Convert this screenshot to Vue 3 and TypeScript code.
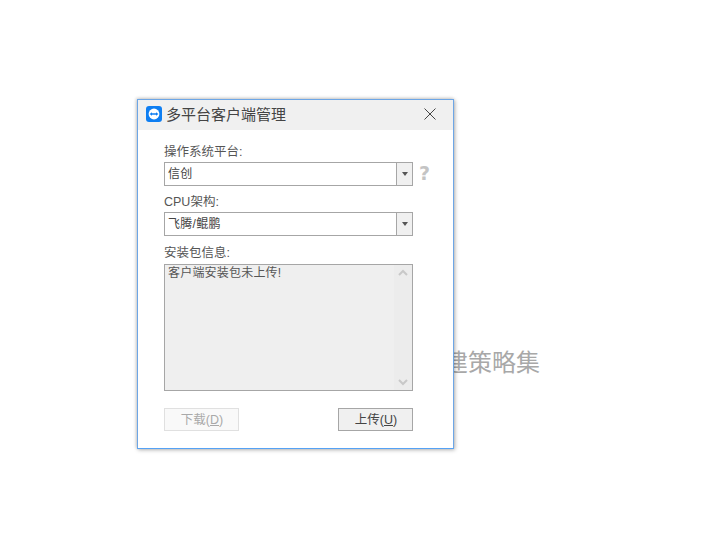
<script setup lang="ts">
const osValue = '信创'
const cpuValue = '飞腾/鲲鹏'
</script>

<template>
  <div class="page">
    <div class="bg-text">新建策略集</div>
    <section class="dialog">
      <header class="titlebar">
        <svg class="logo" width="16" height="16" viewBox="0 0 16 16">
          <rect width="16" height="16" rx="3" fill="#0e7ef2" />
          <circle cx="8" cy="8" r="5.4" fill="#fff" />
          <path d="M3.6 8 L6 6.3 V7.2 H10 V6.3 L12.4 8 L10 9.7 V8.8 H6 V9.7 Z" fill="#0e7ef2" />
        </svg>
        <span class="title">多平台客户端管理</span>
        <svg class="close" width="12" height="12" viewBox="0 0 12 12">
          <path d="M.5 .5 L11.5 11.5 M11.5 .5 L.5 11.5" stroke="#444" stroke-width="1" fill="none" />
        </svg>
      </header>
      <div class="body">
        <label class="label">操作系统平台:</label>
        <div class="select-row">
          <div class="select">
            <span class="value">{{ osValue }}</span>
            <span class="arrow"><i class="caret"></i></span>
          </div>
          <span class="help">?</span>
        </div>
        <label class="label second">CPU架构:</label>
        <div class="select">
          <span class="value">{{ cpuValue }}</span>
          <span class="arrow"><i class="caret"></i></span>
        </div>
        <label class="label third">安装包信息:</label>
        <div class="textarea">
          <div class="msg">客户端安装包未上传!</div>
          <div class="scrollbar">
            <svg width="10" height="7" viewBox="0 0 10 7"><path d="M1 6 L5 2 L9 6" stroke="#c8c8c8" stroke-width="2" fill="none" /></svg>
            <svg width="10" height="7" viewBox="0 0 10 7"><path d="M1 1 L5 5 L9 1" stroke="#c8c8c8" stroke-width="2" fill="none" /></svg>
          </div>
        </div>
        <div class="actions">
          <button class="btn disabled" type="button">下载(<u>D</u>)</button>
          <button class="btn" type="button">上传(<u>U</u>)</button>
        </div>
      </div>
    </section>
  </div>
</template>

<style>
html, body { margin: 0; background: #fff; }
</style>

<style scoped>
.page {
  position: relative;
  width: 702px;
  height: 555px;
  overflow: hidden;
  background: #fff;
  font-family: "Liberation Sans", "Noto Sans CJK SC", sans-serif;
}
.bg-text {
  position: absolute;
  left: 420px;
  top: 349px;
  font-size: 24px;
  line-height: 28px;
  color: #a8a8a8;
  white-space: nowrap;
}
.dialog {
  position: absolute;
  left: 137px;
  top: 99px;
  width: 317px;
  height: 350px;
  box-sizing: border-box;
  border: 1px solid #6da6e6;
  border-bottom-color: #55a2f5;
  background: #fff;
  box-shadow: 1px 1px 4px rgba(0, 0, 0, 0.3), -1px -1px 3px rgba(0, 0, 0, 0.15);
  display: flex;
  flex-direction: column;
}
.titlebar {
  height: 30px;
  flex: none;
  background: #f0f0f0;
  display: flex;
  align-items: center;
  padding: 0 17px 0 8px;
}
.logo { flex: none; margin-top: -2px; }
.title {
  margin-left: 4px;
  margin-top: -3px;
  font-size: 15px;
  color: #444;
  flex: 1;
}
.close { flex: none; margin-top: -2px; }
.body {
  flex: 1;
  padding: 13px 40px 0 26px;
  display: flex;
  flex-direction: column;
  align-items: flex-start;
}
.label {
  font-size: 12.5px;
  line-height: 18px;
  height: 18px;
  color: #555;
}
.second { margin-top: 7px; }
.third { margin-top: 8px; }
.select-row {
  position: relative;
  width: 249px;
}
.select {
  width: 249px;
  height: 24px;
  margin-top: 1px;
  box-sizing: border-box;
  border: 1px solid #a6a6a6;
  display: flex;
  background: #fff;
}
.value {
  flex: 1;
  font-size: 12px;
  line-height: 22px;
  padding-left: 3px;
  color: #444;
  letter-spacing: 0.3px;
}
.arrow {
  width: 15px;
  flex: none;
  background: #f0f0f0;
  border-left: 1px solid #a6a6a6;
  display: flex;
  align-items: center;
  justify-content: center;
}
.caret {
  width: 0;
  height: 0;
  border-left: 3.5px solid transparent;
  border-right: 3.5px solid transparent;
  border-top: 4px solid #555;
}
.help {
  position: absolute;
  left: 255px;
  top: 0;
  font-size: 19px;
  line-height: 24px;
  font-weight: 700;
  color: #c4c4c4;
  font-family: "DejaVu Sans", sans-serif;
}
.textarea {
  width: 249px;
  height: 127px;
  margin-top: 2px;
  box-sizing: border-box;
  border: 1px solid #a6a6a6;
  background: #efefef;
  display: flex;
}
.msg {
  flex: 1;
  font-size: 12px;
  line-height: 17px;
  padding-left: 3px;
  color: #555;
  letter-spacing: 0.2px;
}
.scrollbar {
  width: 18px;
  flex: none;
  background: #ececec;
  display: flex;
  flex-direction: column;
  align-items: center;
  justify-content: space-between;
  padding: 4px 0 4px;
  box-sizing: border-box;
}
.actions {
  width: 249px;
  margin-top: 17px;
  display: flex;
  justify-content: space-between;
}
.btn {
  width: 75px;
  height: 23px;
  padding: 2px 0 0 1px;
  box-sizing: border-box;
  border: 1px solid #a6a6a6;
  background: #f0f0f0;
  color: #444;
  font-family: inherit;
  font-size: 12.5px;
  line-height: 19px;
}
.btn.disabled {
  border-color: #e0e0e0;
  background: #f9f9f9;
  color: #a9a9a9;
}
</style>
